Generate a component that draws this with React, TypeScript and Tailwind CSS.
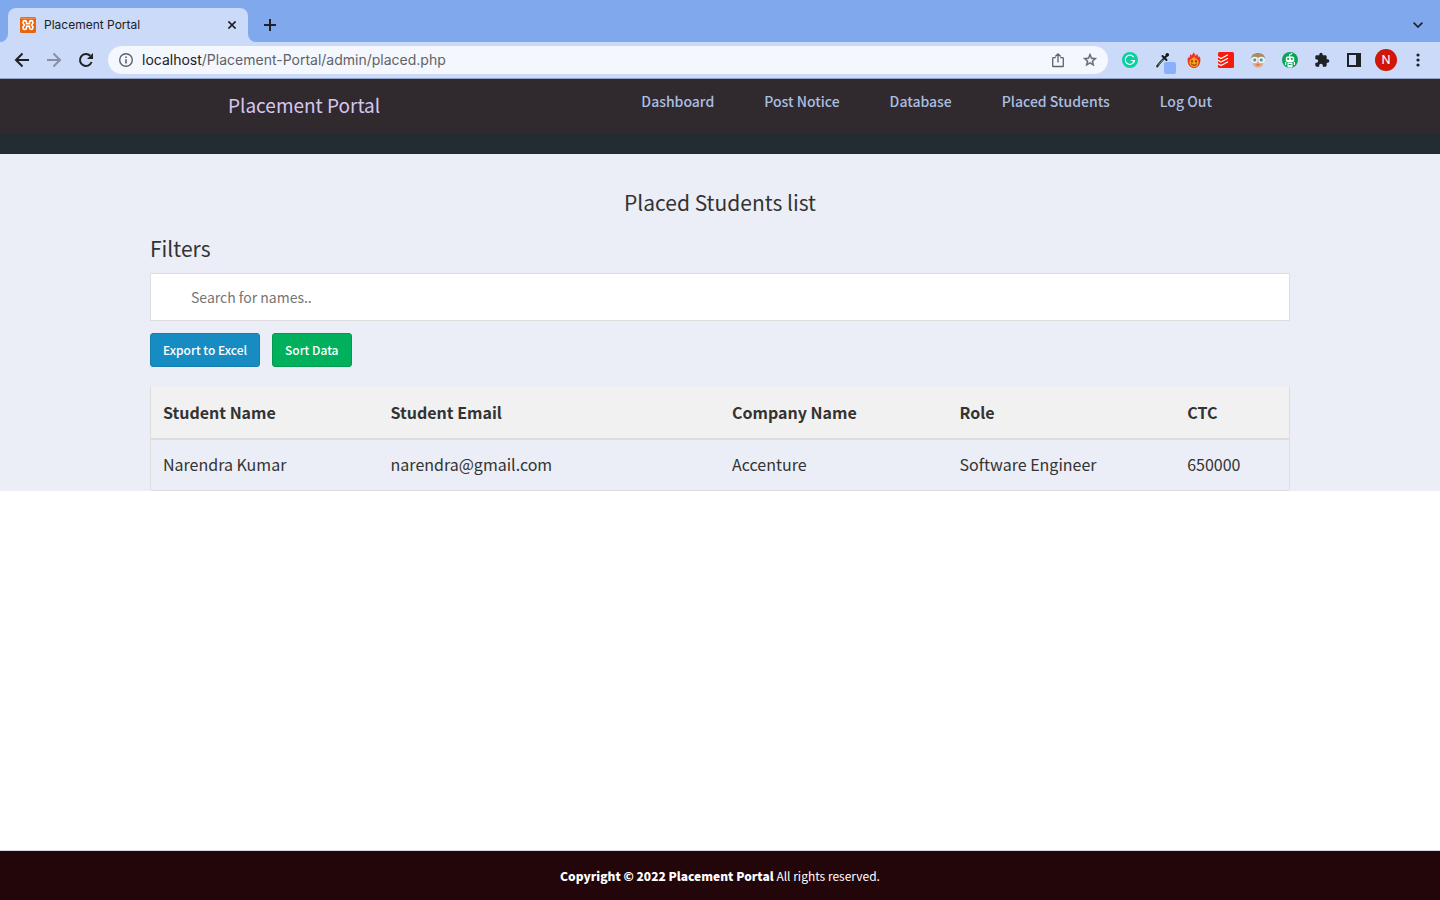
import React from "react";

const pageFont = "font-['Noto_Sans_CJK_SC',sans-serif]";

const navLinks = ["Dashboard", "Post Notice", "Database", "Placed Students", "Log Out"];

const columns = [
  { label: "Student Name", width: "w-[20%]" },
  { label: "Student Email", width: "w-[30%]" },
  { label: "Company Name", width: "w-[20%]" },
  { label: "Role", width: "w-[20%]" },
  { label: "CTC", width: "w-[10%]" },
];

const students = [
  ["Narendra Kumar", "narendra@gmail.com", "Accenture", "Software Engineer", "650000"],
];

function XamppIcon() {
  return (
    <svg width="16" height="16" viewBox="0 0 16 16" aria-hidden="true">
      <rect width="16" height="16" rx="1.5" fill="#e8650c" />
      <rect x="1" y=".7" width="14" height="1.3" rx=".6" fill="#f98b3c" />
      <path
        d="M6.500 6.800V5.300a1.700 1.700 0 0 0-3.400 0v1L4.500 8 3.100 9.700v1a1.700 1.700 0 0 0 3.400 0V9.200h3v1.500a1.700 1.700 0 0 0 3.400 0v-1L11.500 8l1.400-1.700v-1a1.700 1.700 0 0 0-3.400 0v1.500z"
        fill="none"
        stroke="#fff"
        strokeWidth="1.6"
        strokeLinejoin="round"
      />
    </svg>
  );
}

function BackIcon({ color }: { color: string }) {
  return (
    <svg width="16" height="16" viewBox="0 0 16 16" fill="none" stroke={color} strokeWidth="2" aria-hidden="true">
      <path d="M15 8H2.500M8.500 1.500 2 8l6.500 6.500" />
    </svg>
  );
}

function ReloadIcon() {
  return (
    <svg width="16" height="16" viewBox="0 0 16 16" aria-hidden="true">
      <path d="M13.600 10A6 6 0 1 1 12.300 3.800" fill="none" stroke="#202124" strokeWidth="2" />
      <path d="M15 1v6H9z" fill="#202124" />
    </svg>
  );
}

function InfoIcon() {
  return (
    <svg width="16" height="16" viewBox="0 0 16 16" aria-hidden="true">
      <circle cx="8" cy="8" r="6.300" fill="none" stroke="#5f6368" strokeWidth="1.400" />
      <path d="M7.200 7.200h1.600v4.200H7.200zM7.200 4.500h1.600v1.600H7.200z" fill="#5f6368" />
    </svg>
  );
}

function ShareIcon() {
  return (
    <svg width="16" height="16" viewBox="0 0 16 16" fill="none" stroke="#5f6368" strokeWidth="1.300" aria-hidden="true">
      <path d="M5.700 5.600H3.300a.6.6 0 0 0-.6.600v7.700c0 .3.300.6.600.6h9.400c.3 0 .6-.3.600-.6V6.200a.6.6 0 0 0-.6-.6h-2.400M8 10.500V2M5.300 4.500 8 1.800l2.700 2.700" />
    </svg>
  );
}

function StarIcon() {
  return (
    <svg width="16" height="16" viewBox="0 0 24 24" fill="#5f6368" aria-hidden="true">
      <path
        stroke="#5f6368"
        strokeWidth=".6"
        d="M22 9.240l-7.190-.62L12 2 9.190 8.630 2 9.240l5.460 4.730L5.820 21 12 17.270 18.180 21l-1.630-7.030L22 9.240zM12 15.400l-3.760 2.270 1-4.280-3.320-2.880 4.380-.38L12 6.100l1.710 4.040 4.380.38-3.320 2.880 1 4.280L12 15.400z"
      />
    </svg>
  );
}

function GrammarlyIcon() {
  return (
    <svg width="16" height="16" viewBox="0 0 16 16" aria-hidden="true">
      <circle cx="8" cy="8" r="8" fill="#0bcf9d" />
      <path d="M11.700 5.200A4.600 4.600 0 1 0 12.300 9" fill="none" stroke="#fff" strokeWidth="1.200" />
      <path d="M8.800 8.500h3.500l-1 2.400" fill="none" stroke="#fff" strokeWidth="1.200" />
    </svg>
  );
}

function PickerIcon() {
  return (
    <svg width="22" height="22" viewBox="0 0 22 22" aria-hidden="true">
      <rect x="10" y="10" width="12" height="12" rx="2" fill="#8ab0fb" />
      <path d="M3.200 14.400C5 11.500 7 9.500 10 6.500" fill="none" stroke="#26352f" strokeWidth="2.200" strokeLinecap="round" />
      <path d="M4.500 12.800 9.500 7.500" stroke="#6fa48c" strokeWidth=".9" />
      <path d="m8.500 4 4 4M11 5.500l2.500-2.500" stroke="#17191d" strokeWidth="2" strokeLinecap="round" />
      <circle cx="13.300" cy="2.800" r="1.800" fill="#17191d" />
    </svg>
  );
}

function FlameIcon() {
  return (
    <svg width="16" height="16" viewBox="0 0 16 16" aria-hidden="true">
      <path
        d="M7.300 0c.3 1.500 2.200 2 2.500 4 .8-.4 1-1.300.9-2.200 1.500 1.200 1.300 2.800 2 3.500.4-.2.500-.6.500-1C14.700 6 14.500 8 14.200 10c-.4 3.500-3 6-6.200 6s-5.800-2.500-6.200-6C1.500 8 1.400 6.300 2.400 5c.1.600.4.900.8 1C4 4.700 3.600 3 4.600 1.800c.1.800.3 1.300.8 1.600C6.500 2.500 7.300 1.500 7.300 0z"
        fill="#ee3324"
      />
      <path d="M8 4.500c.5 1.500 4.700 2.500 4.700 6A4.700 4.700 0 0 1 8 15.200a4.700 4.700 0 0 1-4.700-4.700C3.300 7 7.500 6.500 8 4.500z" fill="#fba01c" />
      <ellipse cx="6" cy="9.400" rx=".8" ry="1.100" fill="#47220d" />
      <ellipse cx="10" cy="9.400" rx=".8" ry="1.100" fill="#47220d" />
      <path d="M5 11.700c1.500 2 4.500 2 6 0" fill="none" stroke="#6a2b0e" strokeWidth="1" />
    </svg>
  );
}

function TodoistIcon() {
  return (
    <svg width="16" height="16" viewBox="0 0 16 16" aria-hidden="true">
      <rect width="16" height="16" rx="1.500" fill="#f71b0c" />
      <path d="m0 4.700 3 1.800L10 2.700M0 8.200 3 10l7-3.800M0 11.700l3 1.800 7-3.800" fill="none" stroke="#fff" strokeWidth="1.200" />
    </svg>
  );
}

function FaceIcon() {
  return (
    <svg width="16" height="16" viewBox="0 0 16 16" aria-hidden="true">
      <path d="M2 6.500h12c0 6-2 9-6 9s-6-3-6-9z" fill="#e5a37c" />
      <path d="M1 7C1 3 4 1 8 1s7 2 7 6l-2.500-1.500h-9z" fill="#ab8a60" />
      <circle cx="4.500" cy="8" r="2.600" fill="#8fc3d3" stroke="#f4f8fa" strokeWidth="1.300" />
      <circle cx="11.500" cy="8" r="2.600" fill="#8fc3d3" stroke="#f4f8fa" strokeWidth="1.300" />
      <circle cx="5" cy="8" r="1.100" fill="#4f8797" />
      <circle cx="11" cy="8" r="1.100" fill="#4f8797" />
      <path d="M6.500 12.800h3" stroke="#b8694c" strokeWidth="1" />
    </svg>
  );
}

function RobotIcon() {
  return (
    <svg width="16" height="16" viewBox="0 0 16 16" aria-hidden="true">
      <circle cx="8" cy="8" r="8" fill="#0aa457" />
      <path d="M7.700 5V2.200h2V1" fill="none" stroke="#fff" strokeWidth="1" />
      <rect x="3.800" y="4.500" width="8.400" height="5.400" rx="1.500" fill="#fff" />
      <rect x="5.300" y="6" width="1.800" height="1.800" fill="#0aa457" />
      <rect x="8.900" y="6" width="1.800" height="1.800" fill="#0aa457" />
      <path d="M5.500 10.500h5V15q-2.500 1.200-5 0zM3 10h1.200v3H3zM11.800 10H13v3h-1.200z" fill="#fff" />
      <path d="M6.500 12.500h3" stroke="#0aa457" strokeWidth="1" />
    </svg>
  );
}

function PuzzleIcon() {
  return (
    <svg width="16" height="16" viewBox="0 0 24 24" fill="#202124" aria-hidden="true">
      <path d="M20.500 11H19V7c0-1.100-.9-2-2-2h-4V3.500a2.500 2.500 0 0 0-5 0V5H4c-1.100 0-1.990.9-1.990 2v3.800H3.500c1.490 0 2.700 1.210 2.700 2.700s-1.210 2.700-2.700 2.700H2V20c0 1.100.9 2 2 2h3.800v-1.500c0-1.490 1.210-2.700 2.700-2.700s2.700 1.210 2.700 2.700V22H17c1.100 0 2-.9 2-2v-4h1.500a2.500 2.500 0 0 0 0-5z" />
    </svg>
  );
}

function SidePanelIcon() {
  return (
    <svg width="14" height="14" viewBox="0 0 14 14" aria-hidden="true">
      <path d="M0 0h14v14H0zM2 2v10h7V2z" fill="#202124" fillRule="evenodd" />
    </svg>
  );
}

function TabCorner({ flip }: { flip?: boolean }) {
  return (
    <svg width="8" height="8" viewBox="0 0 8 8" className="self-end" aria-hidden="true">
      <path d={flip ? "M0 0v8h8A8 8 0 0 1 0 0z" : "M8 0v8H0A8 8 0 0 0 8 0z"} fill="#cadaf8" />
    </svg>
  );
}

function BrowserChrome() {
  const slot = "flex size-8 items-center justify-center";
  return (
    <div className="font-[Inter,sans-serif]">
      <div className="flex h-[42px] items-stretch bg-[#7fa8ed]">
        <TabCorner />
        <div className="mt-2 flex w-60 items-center rounded-t-lg bg-[#cadaf8] pl-3 pr-2">
          <XamppIcon />
          <span className="ml-2 flex-1 text-[12px] text-[#202124]">Placement Portal</span>
          <button aria-label="Close tab" className="flex size-4 items-center justify-center">
            <svg width="8" height="8" viewBox="0 0 8 8" stroke="#202124" strokeWidth="1.600" aria-hidden="true">
              <path d="m.4.4 7.200 7.200M7.600.4.4 7.600" />
            </svg>
          </button>
        </div>
        <TabCorner flip />
        <button aria-label="New tab" className="mt-2 ml-2 flex w-3 items-center justify-center">
          <svg width="12" height="12" viewBox="0 0 12 12" className="shrink-0" stroke="#202124" strokeWidth="2" aria-hidden="true">
            <path d="M6 0v12M0 6h12" />
          </svg>
        </button>
        <button aria-label="Search tabs" className="mt-2 mr-4 ml-auto flex w-3 items-center justify-center">
          <svg width="10" height="6" viewBox="0 0 10 6" fill="none" stroke="#202124" strokeWidth="1.700" aria-hidden="true">
            <path d="m.600.600 4.400 4.400L9.400.6" />
          </svg>
        </button>
      </div>
      <div className="flex h-[37px] items-center border-b border-[#93a3c6] bg-[#cadaf8] px-1.5">
        <button aria-label="Back" className={slot}>
          <BackIcon color="#202124" />
        </button>
        <button aria-label="Forward" className={slot}>
          <span className="rotate-180">
            <BackIcon color="#8690a5" />
          </span>
        </button>
        <button aria-label="Reload" className={slot}>
          <ReloadIcon />
        </button>
        <div className="ml-1.5 flex h-7 flex-1 items-center rounded-full bg-[#f4f7fe] px-2.5">
          <InfoIcon />
          <span className="ml-2 flex-1 text-[14px] leading-5 text-[#5f6368]">
            <span className="text-[#202124]">localhost</span>/Placement-Portal/admin/placed.php
          </span>
          <button aria-label="Share" className="mr-4">
            <ShareIcon />
          </button>
          <button aria-label="Bookmark">
            <StarIcon />
          </button>
        </div>
        <div className="ml-1.5 flex items-center">
          <button aria-label="Grammarly" className={slot}><GrammarlyIcon /></button>
          <button aria-label="Color picker" className="flex size-8 items-end justify-end pr-0.5 pb-0.5"><PickerIcon /></button>
          <button aria-label="Flame extension" className={slot}><FlameIcon /></button>
          <button aria-label="Todoist" className={slot}><TodoistIcon /></button>
          <button aria-label="Face extension" className={slot}><FaceIcon /></button>
          <button aria-label="Robot extension" className={slot}><RobotIcon /></button>
          <button aria-label="Extensions" className={slot}><PuzzleIcon /></button>
          <button aria-label="Side panel" className={slot}><SidePanelIcon /></button>
          <button aria-label="Profile" className={slot}>
            <span className="flex size-[22px] items-center justify-center rounded-full bg-[#d11507] text-[12px] text-white">N</span>
          </button>
          <button aria-label="Menu" className={slot}>
            <svg width="4" height="14" viewBox="0 0 4 14" fill="#202124" aria-hidden="true">
              <circle cx="2" cy="2" r="1.600" />
              <circle cx="2" cy="7" r="1.600" />
              <circle cx="2" cy="12" r="1.600" />
            </svg>
          </button>
        </div>
      </div>
    </div>
  );
}

export default function App() {
  return (
    <div className="flex min-h-screen flex-col bg-white">
      <BrowserChrome />
      <div className={`flex flex-1 flex-col text-[#333] ${pageFont}`}>
        <header className="border-b-[20px] border-[#212d32] bg-[#30292e]">
          <div className="mx-auto flex h-[55px] max-w-[984px] items-start justify-between">
            <a href="#home" className="pt-[11px] text-[19px] leading-[30px] text-[#d5c6ee]">Placement Portal</a>
            <nav className="flex gap-[50px] pt-[11px]">
              {navLinks.map((label) => (
                <a key={label} href="#nav" className="text-[14px] leading-[22px] font-medium text-[#a9bfe0]">
                  {label}
                </a>
              ))}
            </nav>
          </div>
        </header>

        <main className="bg-[#ebeef6]">
          <div className="mx-auto max-w-[1140px]">
            <h1 className="pt-[35px] text-center text-[21px] leading-[26px]">Placed Students list</h1>
            <label htmlFor="search" className="mt-5 block text-[21px] leading-[26px]">Filters</label>
            <input
              id="search"
              type="text"
              placeholder="Search for names.."
              className="mt-3 block h-12 w-full border border-[#ddd] bg-white pr-5 pl-10 text-[14px] placeholder:text-[#757575]"
            />
            <div className="mt-3 flex gap-3">
              <button className="h-[34px] rounded-[3px] border border-[#167eae] bg-[#178cc2] px-3 text-[12px] font-medium text-white">
                Export to Excel
              </button>
              <button className="h-[34px] rounded-[3px] border border-[#009a4e] bg-[#00b05c] px-3 text-[12px] font-medium text-white">
                Sort Data
              </button>
            </div>
            <table className="mt-5 w-full table-fixed border-separate border-spacing-0 rounded-b-[2px] border border-t-0 border-[#ddd] text-left text-[16px] leading-[26px]">
              <thead className="bg-[#f1f1f1]">
                <tr>
                  {columns.map((c) => (
                    <th key={c.label} className={`border-b-2 border-[#ddd] px-3 pt-3 pb-[13px] font-bold ${c.width}`}>
                      {c.label}
                    </th>
                  ))}
                </tr>
              </thead>
              <tbody>
                {students.map((row) => (
                  <tr key={row[1]}>
                    {row.map((cell) => (
                      <td key={cell} className="px-3 pt-[11px] pb-[13px]">{cell}</td>
                    ))}
                  </tr>
                ))}
              </tbody>
            </table>
          </div>
        </main>

        <footer className="mt-auto border-t border-[#d2d6de] bg-[#230609] py-[15px] text-center text-[12px] leading-[19px] text-white">
          <strong className="font-black">Copyright © 2022 Placement Portal</strong> All rights reserved.
        </footer>
      </div>
    </div>
  );
}
